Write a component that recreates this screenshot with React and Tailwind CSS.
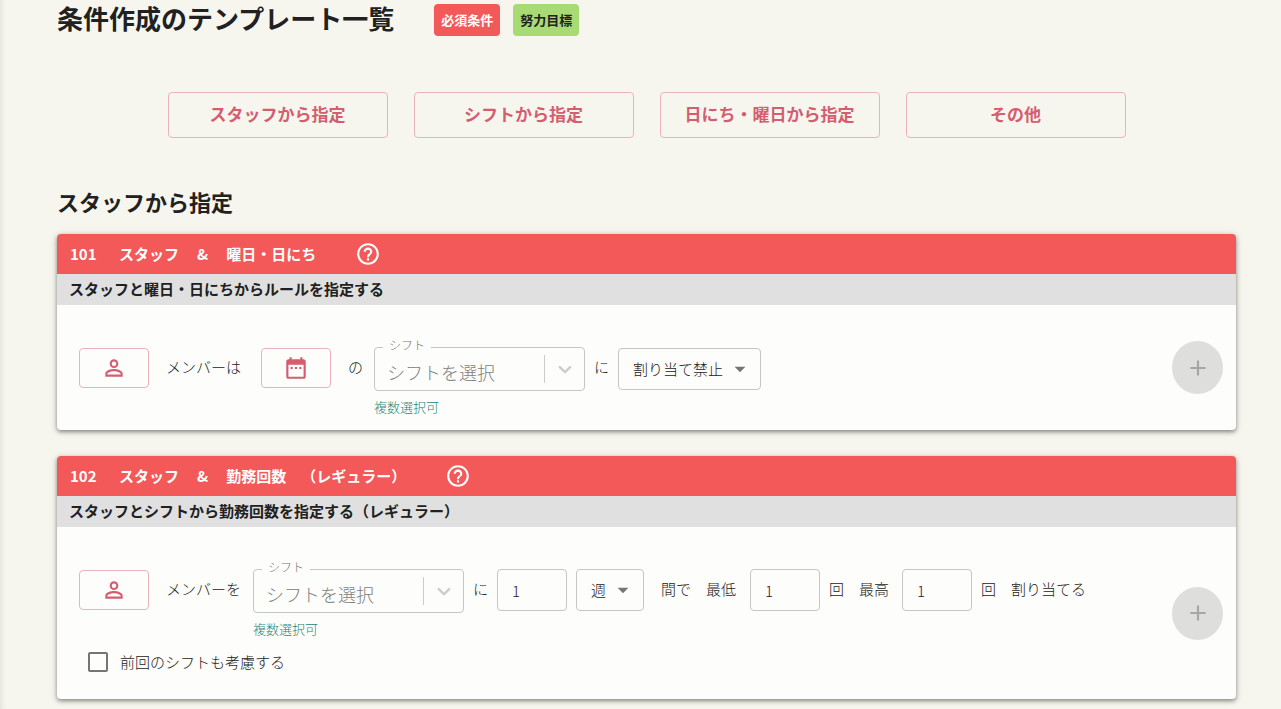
import React, { useState } from 'react';
import { MdAdd, MdArrowDropDown, MdDateRange, MdHelpOutline, MdPersonOutline } from 'react-icons/md';

const categories = ['スタッフから指定', 'シフトから指定', '日にち・曜日から指定', 'その他'];

const IconButton = ({ label, children }) => (
  <div className="flex h-[42px] items-center">
    <button
      type="button"
      aria-label={label}
      className="flex h-10 w-[70px] items-center justify-center rounded-sm border border-[#eab3bc] text-[#d45d70]"
    >
      {children}
    </button>
  </div>
);

const Word = ({ className, children }) => (
  <span className={`flex h-10 shrink-0 items-center whitespace-nowrap ${className}`}>{children}</span>
);

const ShiftSelect = ({ id }) => (
  <div className="w-[211px] shrink-0">
    <div className="relative">
      <select
        id={id}
        className="block h-11 w-full appearance-none rounded-sm border border-[#c6c6c6] bg-transparent pt-1.5 pl-3 text-lg leading-6 text-[#808080]"
      >
        <option>シフトを選択</option>
      </select>
      <label
        htmlFor={id}
        className="absolute -top-2.5 left-[9px] bg-[#fdfdfb] px-1.5 text-xs leading-4 text-[#757575]"
      >
        シフト
      </label>
      <div className="pointer-events-none absolute inset-y-2 right-0 flex w-[41px] items-center justify-center border-l border-[#ccc] text-[#ccc]">
        <svg width="22" height="22" viewBox="0 0 20 20" fill="currentColor" aria-hidden="true">
          <path d="M4.516 7.548c0.436-0.446 1.043-0.481 1.576 0l3.908 3.747 3.908-3.747c0.533-0.481 1.141-0.446 1.574 0 0.436 0.445 0.408 1.197 0 1.615-0.406 0.418-4.695 4.502-4.695 4.502-0.217 0.223-0.502 0.335-0.787 0.335s-0.57-0.112-0.789-0.335c0 0-4.287-4.084-4.695-4.502s-0.436-1.17 0-1.615z" />
        </svg>
      </div>
    </div>
    <p className="mt-1.5 text-[13px] leading-5 text-[#1f8576]">複数選択可</p>
  </div>
);

const Dropdown = ({ label, options, className }) => (
  <div className={`relative flex h-[42px] shrink-0 items-center ${className}`}>
    <select
      aria-label={label}
      className="h-full w-full appearance-none rounded-sm border border-[#c6c6c6] bg-transparent pl-3.5"
    >
      {options.map((option) => (
        <option key={option}>{option}</option>
      ))}
    </select>
    <MdArrowDropDown size={26} className="pointer-events-none absolute right-2 text-[#757575]" />
  </div>
);

const NumberInput = ({ label }) => {
  const [value, setValue] = useState('1');

  return (
    <input
      type="text"
      inputMode="numeric"
      aria-label={label}
      value={value}
      onChange={(e) => setValue(e.target.value)}
      className="h-[42px] w-[70px] shrink-0 rounded-sm border border-[#c6c6c6] bg-transparent px-3.5"
    />
  );
};

const TemplateCard = ({ number, subject, target, description, children }) => (
  <article className="overflow-hidden rounded bg-[#fdfdfb] shadow-[0_2px_4px_rgba(0,0,0,0.4),0_1px_8px_rgba(0,0,0,0.12)]">
    <header className="flex h-10 items-center bg-[#f35959] pl-[13px] font-bold text-white">
      <span className="w-[49px]">{number}</span>
      <h3 className="flex gap-[18px]">
        <span>{subject}</span>
        <span>&amp;</span>
        <span>{target}</span>
      </h3>
      <button type="button" aria-label="ヘルプ" className="ml-[39px]">
        <MdHelpOutline size={26} />
      </button>
    </header>
    <p className="bg-[#e0e0e0] pb-0.5 pl-3 leading-[29px] font-bold">{description}</p>
    <div className="flex items-center pr-[13px] pl-[22px]">
      <div className="flex-1 pt-[42px]">{children}</div>
      <button
        type="button"
        aria-label="追加"
        disabled
        className="flex h-[53px] w-[51px] shrink-0 items-center justify-center rounded-[50%] bg-[#dededd] text-[#a6a6a6]"
      >
        <MdAdd size={26} />
      </button>
    </div>
  </article>
);

const App = () => {
  const [includePrevious, setIncludePrevious] = useState(false);

  return (
    <main className="min-h-screen bg-[#f7f6ee] pr-[45px] pb-2.5 pl-[57px] font-['Noto_Sans_CJK_JP',sans-serif] text-[15px] font-light text-[#212121] shadow-[inset_6px_0_5px_-4px_rgba(0,0,0,0.08)] [text-spacing-trim:space-all]">
      <div className="flex items-start">
        <h1 className="text-[26px] leading-9 font-bold">条件作成のテンプレート一覧</h1>
        <span className="mt-1 ml-10 w-[66px] rounded-sm bg-[#f35959] text-center text-[13px] leading-8 font-bold text-white">
          必須条件
        </span>
        <span className="mt-1 ml-[13px] w-[66px] rounded-sm bg-[#a9db74] text-center text-[13px] leading-8 font-bold">
          努力目標
        </span>
      </div>

      <nav className="mt-14 flex justify-center gap-[26px]">
        {categories.map((category) => (
          <button
            key={category}
            type="button"
            className="h-[46px] w-[220px] rounded-sm border border-[#eab3bc] pb-0.5 text-[17px] font-bold text-[#d45d70]"
          >
            {category}
          </button>
        ))}
      </nav>

      <h2 className="mt-[47px] text-[22px] leading-8 font-bold">スタッフから指定</h2>

      <div className="mt-[17px] flex flex-col gap-[26px]">
        <TemplateCard
          number="101"
          subject="スタッフ"
          target="曜日・日にち"
          description="スタッフと曜日・日にちからルールを指定する"
        >
          <div className="flex items-start pb-[13px]">
            <IconButton label="スタッフを選択">
              <MdPersonOutline size={26} />
            </IconButton>
            <Word className="ml-[17px] w-[95px]">メンバーは</Word>
            <IconButton label="日付を選択">
              <MdDateRange size={26} />
            </IconButton>
            <Word className="ml-[17px] w-[26px]">の</Word>
            <ShiftSelect id="shift-101" />
            <Word className="ml-[9px] w-6">に</Word>
            <Dropdown label="割り当て" options={['割り当て禁止', '割り当てる']} className="mt-px w-[143px]" />
          </div>
        </TemplateCard>

        <TemplateCard
          number="102"
          subject="スタッフ"
          target="勤務回数　（レギュラー）"
          description="スタッフとシフトから勤務回数を指定する（レギュラー）"
        >
          <div className="flex items-start">
            <IconButton label="スタッフを選択">
              <MdPersonOutline size={26} />
            </IconButton>
            <Word className="ml-[17px] w-[87px]">メンバーを</Word>
            <ShiftSelect id="shift-102" />
            <Word className="ml-[9px] w-6">に</Word>
            <NumberInput label="期間" />
            <Dropdown label="期間の単位" options={['週', '月']} className="ml-[9px] w-[68px]" />
            <Word className="ml-[17px] w-[89px]">間で　最低</Word>
            <NumberInput label="最低回数" />
            <Word className="ml-[9px] w-[73px]">回　最高</Word>
            <NumberInput label="最高回数" />
            <Word className="ml-[9px]">回　割り当てる</Word>
          </div>
          <label className="mt-[13px] mb-[27px] ml-[9px] flex h-5 w-fit items-center gap-3">
            <input
              type="checkbox"
              checked={includePrevious}
              onChange={(e) => setIncludePrevious(e.target.checked)}
              className="size-5 appearance-none rounded-xs border-2 border-[#757575] checked:bg-[#d45d70]"
            />
            前回のシフトも考慮する
          </label>
        </TemplateCard>
      </div>
    </main>
  );
};

export default App;
